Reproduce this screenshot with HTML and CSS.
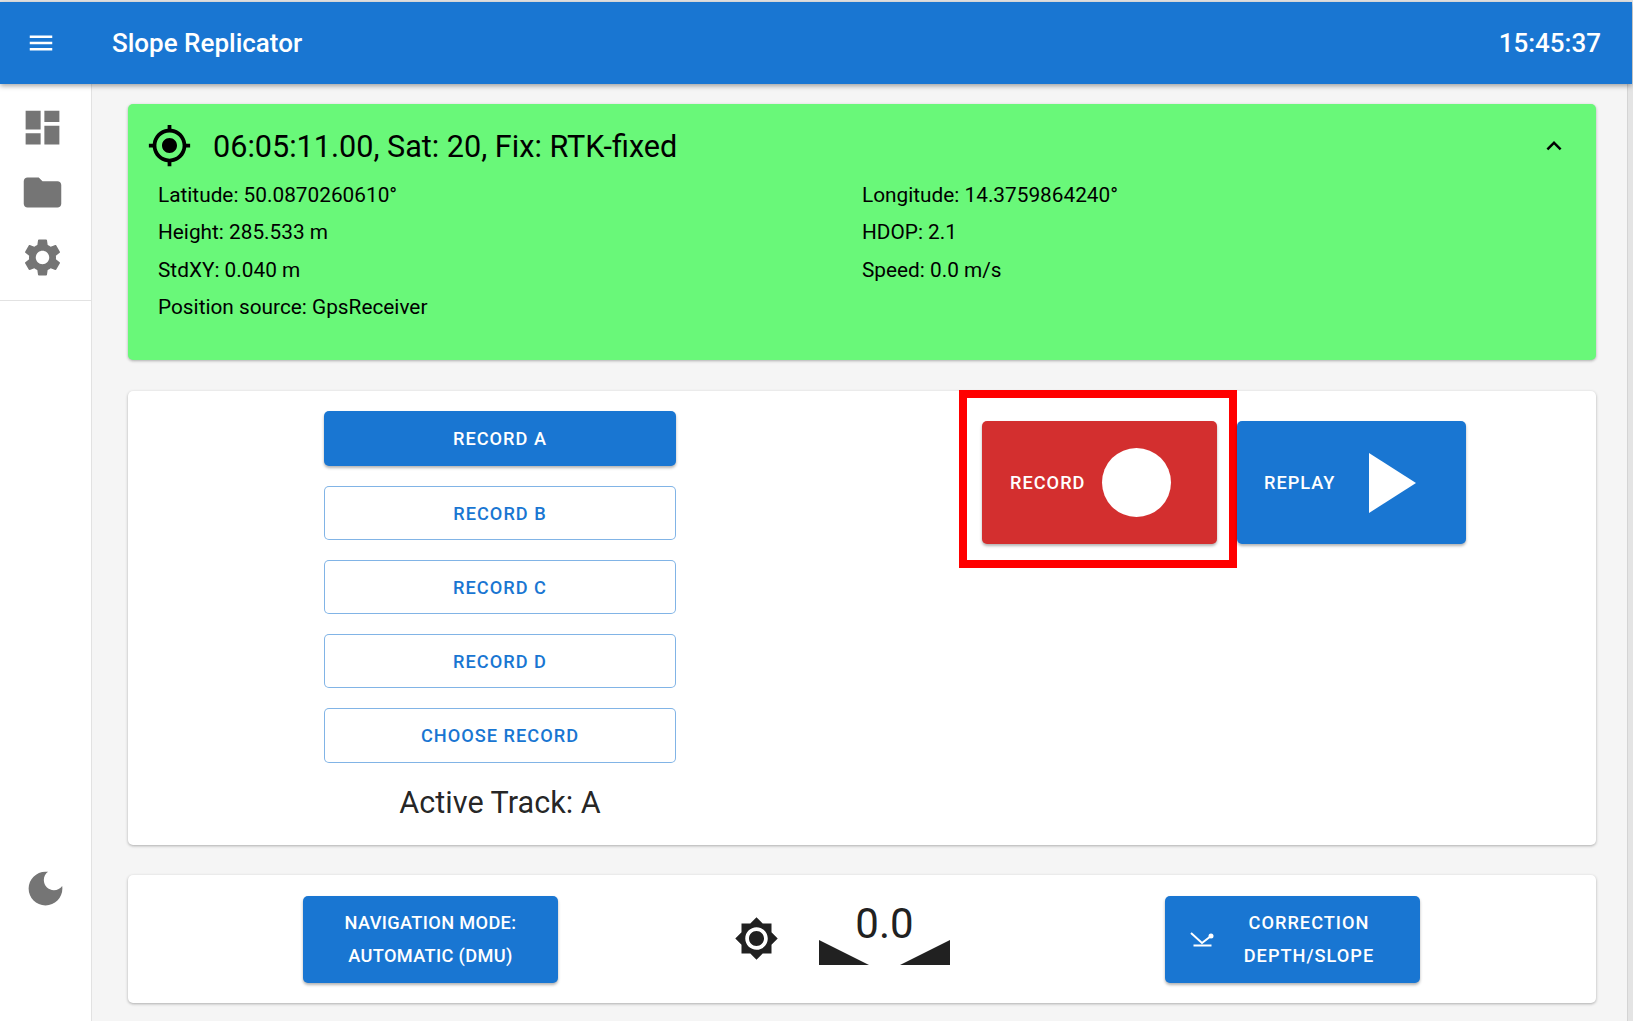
FILE: index.html
```html
<!DOCTYPE html>
<html lang="en">
  <head>
    <meta charset="UTF-8" />
    <meta name="viewport" content="width=device-width, initial-scale=1.0" />
    <title>Slope Replicator</title>
    <link rel="stylesheet" href="styles.css">
  </head>
  <body>
    <header class="topbar">
      <svg class="menu-icon" viewBox="0 0 24 24"><path d="M3 18h18v-2H3v2zm0-5h18v-2H3v2zm0-7v2h18V6H3z"/></svg>
      <div class="title">Slope Replicator</div>
      <div class="clock">15:45:37</div>
    </header>

    <div class="layout">
      <nav class="sidebar">
        <div class="nav-icons">
          <svg class="nav-icon" viewBox="0 0 24 24"><path d="M3 13h8V3H3v10zm0 8h8v-6H3v6zm10 0h8V11h-8v10zm0-18v6h8V3h-8z"/></svg>
          <svg class="nav-icon" viewBox="0 0 24 24"><path d="M10 4H4c-1.1 0-2 .9-2 2v12c0 1.1.9 2 2 2h16c1.1 0 2-.9 2-2V8c0-1.1-.9-2-2-2h-8l-2-2z"/></svg>
          <svg class="nav-icon" viewBox="0 0 24 24"><path d="M19.14 12.94c.04-.3.06-.61.06-.94 0-.32-.02-.64-.07-.94l2.03-1.58c.18-.14.23-.41.12-.61l-1.92-3.32c-.12-.22-.37-.29-.59-.22l-2.39.96c-.5-.38-1.03-.7-1.62-.94l-.36-2.54c-.04-.24-.24-.41-.48-.41h-3.84c-.24 0-.43.17-.47.41l-.36 2.54c-.59.24-1.13.57-1.62.94l-2.39-.96c-.22-.08-.47 0-.59.22L2.74 8.87c-.12.21-.08.47.12.61l2.03 1.58c-.05.3-.09.63-.09.94s.02.64.07.94l-2.03 1.58c-.18.14-.23.41-.12.61l1.92 3.32c.12.22.37.29.59.22l2.39-.96c.5.38 1.03.7 1.62.94l.36 2.54c.05.24.24.41.48.41h3.84c.24 0 .44-.17.47-.41l.36-2.54c.59-.24 1.13-.56 1.62-.94l2.39.96c.22.08.47 0 .59-.22l1.92-3.32c.12-.22.07-.47-.12-.61l-2.01-1.58zM12 15.6c-1.98 0-3.6-1.62-3.6-3.6s1.62-3.6 3.6-3.6 3.6 1.62 3.6 3.6-1.62 3.6-3.6 3.6z"/></svg>
        </div>
        <svg class="moon-icon" viewBox="0 0 24 24"><path d="M12 3c-4.97 0-9 4.03-9 9s4.03 9 9 9 9-4.03 9-9c0-.46-.04-.92-.1-1.36-.98 1.37-2.58 2.26-4.4 2.26-2.98 0-5.4-2.42-5.4-5.4 0-1.81.89-3.42 2.26-4.4-.44-.06-.9-.1-1.36-.1z"/></svg>
      </nav>

      <main class="main">
        <section class="card gps-card">
          <div class="gps-head">
            <svg class="gps-icon" viewBox="0 0 24 24"><path d="M12 8c-2.21 0-4 1.79-4 4s1.79 4 4 4 4-1.79 4-4-1.79-4-4-4zm8.94 3c-.46-4.17-3.77-7.48-7.94-7.94V1h-2v2.06C6.83 3.52 3.52 6.83 3.06 11H1v2h2.06c.46 4.17 3.77 7.48 7.94 7.94V23h2v-2.06c4.17-.46 7.48-3.77 7.94-7.94H23v-2h-2.06zM12 19c-3.87 0-7-3.13-7-7s3.13-7 7-7 7 3.13 7 7-3.13 7-7 7z"/></svg>
            <div class="gps-title">06:05:11.00, Sat: 20, Fix: RTK-fixed</div>
            <svg class="chevron" viewBox="0 0 24 24"><path d="M7.41 15.41L12 10.83l4.59 4.58L18 14l-6-6-6 6z"/></svg>
          </div>
          <div class="gps-grid">
            <div>Latitude: 50.0870260610°</div>
            <div>Longitude: 14.3759864240°</div>
            <div>Height: 285.533 m</div>
            <div>HDOP: 2.1</div>
            <div>StdXY: 0.040 m</div>
            <div>Speed: 0.0 m/s</div>
            <div>Position source: GpsReceiver</div>
          </div>
        </section>

        <section class="card record-card">
          <div class="track-col">
            <button class="btn btn-fill track-btn">Record A</button>
            <button class="btn btn-outline track-btn">Record B</button>
            <button class="btn btn-outline track-btn">Record C</button>
            <button class="btn btn-outline track-btn">Record D</button>
            <button class="btn btn-outline track-btn choose-btn">Choose Record</button>
            <div class="active-track">Active Track: A</div>
          </div>
          <div class="action-col">
            <div class="highlight">
              <button class="btn action-btn btn-red">
                <span>Record</span>
                <span class="rec-dot"></span>
              </button>
            </div>
            <button class="btn btn-fill action-btn replay-btn">
              <span>Replay</span>
              <span class="play-mark"></span>
            </button>
          </div>
        </section>

        <section class="card bottom-card">
          <button class="btn btn-fill wide-btn nav-mode">Navigation mode:<br>Automatic (DMU)</button>
          <div class="slope">
            <svg class="brightness" viewBox="0 0 24 24"><path d="M20 8.69V4h-4.69L12 .69 8.69 4H4v4.69L.69 12 4 15.31V20h4.69L12 23.31 15.31 20H20v-4.69L23.31 12 20 8.69zM12 18c-3.31 0-6-2.69-6-6s2.69-6 6-6 6 2.69 6 6-2.69 6-6 6zm0-10c-2.21 0-4 1.79-4 4s1.79 4 4 4 4-1.79 4-4-1.79-4-4-4z"/></svg>
            <div class="slope-read">
              <div class="slope-value">0.0</div>
              <div class="slope-wedges">
                <svg class="wedge" viewBox="0 0 50 25"><polygon points="0,0 0,25 50,25"/></svg>
                <svg class="wedge" viewBox="0 0 50 25"><polygon points="50,0 50,25 0,25"/></svg>
              </div>
            </div>
          </div>
          <button class="btn btn-fill wide-btn correction">
            <svg class="corr-icon" viewBox="0 0 24 18">
              <path d="M1 3l11 10 9-7M3.500 15.500h18" fill="none" stroke="#fff" stroke-width="2"/>
              <circle cx="21" cy="6" r="2.500" fill="#fff"/>
            </svg>
            <span class="corr-text">Correction<br>Depth/Slope</span>
          </button>
        </section>
      </main>
    </div>
  </body>
</html>
```

FILE: styles.css
```css
* {
  box-sizing: border-box;
}

html,
body {
  height: 100%;
}

body {
  margin: 0;
  padding-top: 2px;
  overflow: hidden;
  background-color: #e4e4e4;
  font-family: Roboto, "Liberation Sans", sans-serif;
  color: rgba(0, 0, 0, 0.87);
}

.topbar {
  position: relative;
  z-index: 2;
  display: flex;
  align-items: center;
  height: 82px;
  margin-right: 1px;
  padding: 0 31px 0 26px;
  background-color: #1976d2;
  color: #fff;
  box-shadow: 0 2px 5px rgba(0, 0, 0, 0.35);
}

.menu-icon {
  width: 30px;
  height: 30px;
  fill: #fff;
}

.title {
  margin-left: 56px;
  font-size: 26px;
  font-weight: 500;
}

.clock {
  margin-left: auto;
  font-size: 26px;
  font-weight: 500;
}

.layout {
  display: flex;
  height: 937px;
}

.sidebar {
  display: flex;
  flex-direction: column;
  width: 92px;
  background-color: #fff;
  border-right: 1px solid #e2e2e2;
}

.nav-icons {
  display: flex;
  flex-direction: column;
  align-items: center;
  gap: 20px;
  height: 217px;
  padding: 21px 6px 0 0;
  border-bottom: 1px solid #e2e2e2;
}

.nav-icon {
  width: 45px;
  height: 45px;
  fill: #757575;
}

.moon-icon {
  width: 45px;
  height: 45px;
  margin: 565px 0 0 23px;
  fill: #757575;
}

.main {
  flex: 1;
  display: flex;
  flex-direction: column;
  gap: 30px;
  padding: 20px 31px 0 36px;
  margin-right: 5px;
  background-color: #f5f5f5;
  border-right: 1px solid #d4d4d4;
}

.card {
  border-radius: 5px;
  background-color: #fff;
  box-shadow: 0 1px 3px rgba(0, 0, 0, 0.3);
}

.gps-card {
  flex: none;
  height: 256px;
  margin-bottom: 1px;
  padding: 19px 17px 0 19px;
  background-color: #69f879;
  color: #000;
}

.gps-head {
  display: flex;
  align-items: center;
  height: 45px;
}

.gps-icon {
  width: 45px;
  height: 45px;
  fill: #000;
}

.gps-title {
  margin-left: 21px;
  padding-top: 1px;
  font-size: 30.600px;
}

.chevron {
  width: 30px;
  height: 30px;
  margin-left: auto;
  margin-right: 10px;
  fill: #000;
}

.gps-grid {
  display: grid;
  grid-template-columns: 704px 1fr;
  grid-auto-rows: 37.500px;
  align-items: center;
  margin-top: 8px;
  padding-left: 11px;
  font-size: 20.800px;
}

.record-card {
  flex: none;
  display: flex;
  height: 454px;
}

.track-col {
  display: flex;
  flex-direction: column;
  align-items: center;
  width: 744px;
  padding-top: 20px;
}

.btn {
  border: none;
  border-radius: 5px;
  font-family: inherit;
  font-size: 18.200px;
  font-weight: 500;
  letter-spacing: 1px;
  text-transform: uppercase;
  cursor: pointer;
}

.btn-fill {
  background-color: #1976d2;
  color: #fff;
  box-shadow: 0 2px 3px rgba(0, 0, 0, 0.3);
}

.btn-red {
  background-color: #d32f2f;
  color: #fff;
  box-shadow: 0 2px 3px rgba(0, 0, 0, 0.3);
}

.btn-outline {
  background-color: #fff;
  border: 1px solid rgba(25, 118, 210, 0.55);
  color: #1976d2;
}

.track-btn {
  flex: none;
  width: 352px;
  height: 54px;
  margin-bottom: 20px;
}

.track-btn:first-child {
  height: 55px;
}

.choose-btn {
  height: 55px;
}

.active-track {
  margin-top: 2px;
  font-size: 30.600px;
}

.action-col {
  display: flex;
  align-items: flex-start;
  padding: 0 0 0 87px;
  margin-top: -1px;
}

.highlight {
  padding: 23px 12px 16px 15px;
  border: 8px solid #f00;
}

.action-btn {
  display: flex;
  align-items: center;
  height: 123px;
  padding: 0 0 0 27px;
  text-align: left;
}

.highlight .action-btn {
  width: 235px;
  padding-left: 28px;
}

.replay-btn {
  width: 229px;
  margin-top: 31px;
}

.rec-dot {
  width: 69px;
  height: 69px;
  margin-left: 17px;
  border-radius: 50%;
  background-color: #fff;
}

.play-mark {
  width: 0;
  height: 0;
  margin-left: 34px;
  border-top: 30px solid transparent;
  border-bottom: 30px solid transparent;
  border-left: 47px solid #fff;
}

.bottom-card {
  flex: none;
  display: flex;
  align-items: center;
  height: 128px;
  padding-left: 175px;
}

.wide-btn {
  flex: none;
  width: 255px;
  height: 87px;
  line-height: 33px;
}

.nav-mode {
  letter-spacing: 0.350px;
}

.slope {
  flex: none;
  display: flex;
  align-items: center;
  margin-left: 176px;
}

.brightness {
  width: 45px;
  height: 45px;
  margin-bottom: 2px;
  fill: #212121;
}

.slope-read {
  display: flex;
  flex-direction: column;
  align-items: center;
  margin-left: 40px;
  margin-bottom: 15px;
}

.slope-value {
  margin-bottom: -9px;
  font-size: 42px;
  line-height: 50px;
  color: #212121;
}

.slope-wedges {
  display: flex;
  gap: 31px;
}

.wedge {
  width: 50px;
  height: 25px;
  fill: #212121;
}

.correction {
  display: flex;
  align-items: center;
  margin-left: 215px;
  padding: 0 0 0 25px;
}

.corr-icon {
  width: 24px;
  height: 18px;
  flex: none;
}

.corr-text {
  flex: 1;
  padding-right: 16px;
  text-align: center;
}
```
